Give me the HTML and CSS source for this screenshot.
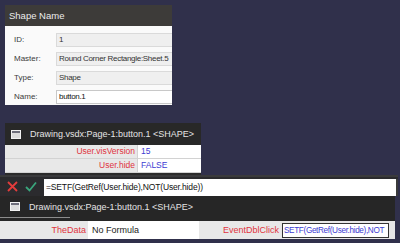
FILE: index.html
```html
<!DOCTYPE html>
<html>
<head>
  <title>Shape sheet</title>
  <link rel="stylesheet" href="styles.css">
</head>
<body>

  <div class="props">
    <div class="props-head">Shape Name</div>
    <div class="props-body">
      <span class="label">ID:</span><span class="field">1</span>
      <span class="label">Master:</span><span class="field">Round Corner Rectangle:Sheet.5</span>
      <span class="label">Type:</span><span class="field">Shape</span>
      <span class="label">Name:</span><span class="field active">button.1</span>
    </div>
  </div>

  <div class="sheet">
    <div class="sheet-title">
      <svg class="win-icon" width="10" height="9" viewBox="0 0 10 9"><rect x="0.5" y="0.5" width="9" height="8" fill="#dcdcdc" stroke="#f2f2f2"/><rect x="1" y="1" width="8" height="2" fill="#6d6d7a"/></svg>
      <span>Drawing.vsdx:Page-1:button.1 &lt;SHAPE&gt;</span>
    </div>
    <div class="sheet-row">
      <span class="cell-name">User.visVersion</span><span class="cell-value">15</span>
    </div>
    <div class="sheet-row">
      <span class="cell-name">User.hide</span><span class="cell-value">FALSE</span>
    </div>
  </div>

  <div class="formula-bar">
    <svg class="btn-x" width="11" height="11" viewBox="0 0 11 11"><path d="M1 1 L10 10 M10 1 L1 10" stroke="#e33c3c" stroke-width="1.8"/></svg>
    <svg class="btn-ok" width="12" height="11" viewBox="0 0 12 11"><path d="M1 6 L4.5 9.5 L11 1.5" fill="none" stroke="#3aa57c" stroke-width="1.8"/></svg>
    <div class="formula-input">=SETF(GetRef(User.hide),NOT(User.hide))</div>
  </div>

  <div class="sheet wide">
    <div class="sheet-title">
      <svg class="win-icon" width="10" height="9" viewBox="0 0 10 9"><rect x="0.5" y="0.5" width="9" height="8" fill="#dcdcdc" stroke="#f2f2f2"/><rect x="1" y="1" width="8" height="2" fill="#6d6d7a"/></svg>
      <span>Drawing.vsdx:Page-1:button.1 &lt;SHAPE&gt;</span>
    </div>
    <div class="cut-row"></div>
    <div class="event-row">
      <span class="cell-name">TheData</span>
      <span class="cell-plain">No Formula</span>
      <span class="cell-name">EventDblClick</span>
      <span class="cell-edit">SETF(GetRef(User.hide),NOT</span>
      <span class="cell-rest"></span>
    </div>
  </div>

</body>
</html>
```

FILE: styles.css
```css
html, body {
  margin: 0;
  padding: 0;
  overflow: hidden;
}

body {
  background-color: #30304b;
  font-family: "Liberation Sans", Arial, sans-serif;
  height: 243px;
}

.props {
  margin: 5px 0 0 5px;
  width: 167px;
  height: 100px;
  overflow: hidden;
  background-color: #fafafa;
}

.props-head {
  height: 21px;
  line-height: 21px;
  background-color: #3d3b39;
  color: #ececec;
  font-size: 9.5px;
  padding-left: 4px;
}

.props-body {
  display: grid;
  grid-template-columns: 51px 120px;
  grid-auto-rows: 14px;
  row-gap: 5px;
  padding-top: 7px;
}

.label {
  font-size: 8px;
  line-height: 14px;
  color: #3a3a3a;
  padding-left: 9px;
}

.field {
  font-size: 8px;
  letter-spacing: -0.3px;
  line-height: 12px;
  color: #333;
  background-color: #efefef;
  border: 1px solid #dadada;
  padding-left: 2px;
  white-space: nowrap;
  overflow: hidden;
}

.field.active {
  background-color: #fff;
  border-color: #c8c8c8;
  color: #111;
}

.sheet {
  margin: 18px 0 0 5px;
  width: 196px;
  background-color: #2b2b2b;
  padding-bottom: 2px;
}

.sheet-title {
  height: 22px;
  display: flex;
  align-items: center;
  gap: 9px;
  padding-left: 6px;
  color: #e4e4e4;
  font-size: 9px;
  white-space: nowrap;
  background-color: #282828;
}

.sheet-row {
  display: grid;
  grid-template-columns: 133px 63px;
  height: 13px;
  border-bottom: 1px solid #d2d2d2;
  font-size: 8.5px;
  line-height: 13px;
}

.cell-name {
  background-color: #e8e8e8;
  color: #e0343e;
  text-align: right;
  padding-right: 2px;
  border-right: 1px solid #d2d2d2;
  white-space: nowrap;
}

.cell-value {
  background-color: #fff;
  color: #3c3cd2;
  padding-left: 3px;
}

.formula-bar {
  height: 21px;
  width: 398px;
  background-color: #2b2b2e;
  border-top: 2px solid #3a3a3c;
  box-sizing: border-box;
  display: flex;
  align-items: flex-end;
  padding-left: 7px;
}

.btn-x {
  margin-bottom: 4px;
}

.btn-ok {
  margin: 0 7px 4px 7px;
}

.formula-input {
  flex: 1;
  height: 17px;
  line-height: 17px;
  background-color: #fff;
  border-right: 2px solid #3b3b3b;
  font-size: 8.5px;
  letter-spacing: -0.15px;
  color: #111;
  padding-left: 2px;
  white-space: nowrap;
  overflow: hidden;
}

.sheet.wide {
  margin: 0;
  width: 395px;
  padding-bottom: 0;
  background-color: #262626;
}

.sheet.wide .sheet-title {
  height: 21px;
  padding-left: 10px;
  background-color: #262626;
}

.cut-row {
  height: 3px;
  margin-right: 325px;
  border-top: 1px solid #8c8c8c;
}

.event-row {
  display: grid;
  grid-template-columns: 88px 111px 82px 108px 1fr;
  height: 18px;
  background-color: #e6e6e6;
  font-size: 9px;
  line-height: 18px;
}

.event-row .cell-name {
  border-right: none;
}

.cell-plain {
  background-color: #fff;
  color: #222;
  padding-left: 4px;
}

.cell-edit {
  margin: 2px 0 0 1px;
  height: 13px;
  line-height: 13px;
  background-color: #fff;
  border: 1.5px solid #333;
  color: #3c3cd2;
  font-size: 8.2px;
  letter-spacing: -0.35px;
  padding-left: 1px;
  white-space: nowrap;
  overflow: hidden;
}
```
